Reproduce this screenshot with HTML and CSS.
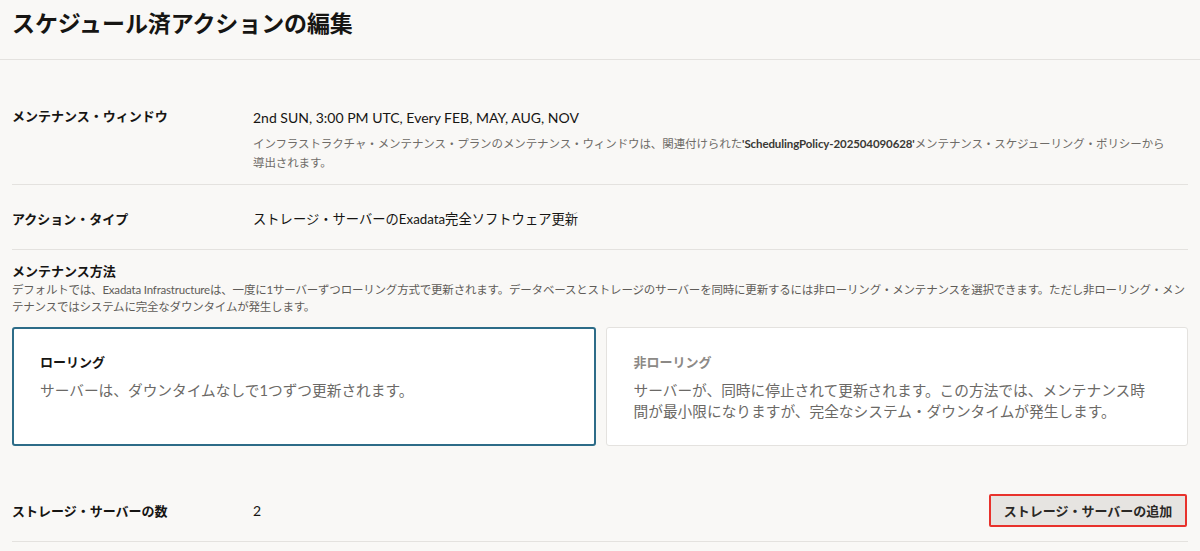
FILE: index.html
```html
<!DOCTYPE html>
<html lang="ja">
<head>
    <meta charset="utf-8">
    <title>スケジュール済アクションの編集</title>
    <link rel="stylesheet" href="styles.css">
</head>
<body>
    <!-- ヘッダー -->
    <header class="page-header">
        <h1 class="page-title">スケジュール済アクションの編集</h1>
    </header>

    <main class="page-body">
        <!-- メンテナンス・ウィンドウ -->
        <div class="field-row window-row">
            <div class="field-label">メンテナンス・ウィンドウ</div>
            <div class="field-value">
                <div class="value-text">2nd SUN, 3:00 PM UTC, Every FEB, MAY, AUG, NOV</div>
                <p class="value-help">インフラストラクチャ・メンテナンス・プランのメンテナンス・ウィンドウは、関連付けられた<b>'SchedulingPolicy-202504090628'</b>メンテナンス・スケジューリング・ポリシーから<br>導出されます。</p>
            </div>
        </div>

        <!-- アクション・タイプ -->
        <div class="field-row type-row">
            <div class="field-label">アクション・タイプ</div>
            <div class="field-value">
                <div class="value-text jp">ストレージ・サーバーのExadata完全ソフトウェア更新</div>
            </div>
        </div>

        <!-- メンテナンス方法 -->
        <section class="method">
            <div class="method-title">メンテナンス方法</div>
            <p class="method-help">デフォルトでは、Exadata Infrastructureは、一度に1サーバーずつローリング方式で更新されます。データベースとストレージのサーバーを同時に更新するには非ローリング・メンテナンスを選択できます。ただし非ローリング・メン<br>テナンスではシステムに完全なダウンタイムが発生します。</p>

            <div class="method-cards">
                <div class="method-card selected">
                    <div class="card-title">ローリング</div>
                    <div class="card-text">サーバーは、ダウンタイムなしで1つずつ更新されます。</div>
                </div>
                <div class="method-card">
                    <div class="card-title muted">非ローリング</div>
                    <div class="card-text">サーバーが、同時に停止されて更新されます。この方法では、メンテナンス時<br>間が最小限になりますが、完全なシステム・ダウンタイムが発生します。</div>
                </div>
            </div>
        </section>

        <!-- ストレージ・サーバーの数 -->
        <div class="field-row count-row">
            <div class="field-label">ストレージ・サーバーの数</div>
            <div class="field-value">
                <div class="value-text">2</div>
            </div>
            <button class="add-button">ストレージ・サーバーの追加</button>
        </div>
    </main>
</body>
</html>
```

FILE: styles.css
```css
body {
    margin: 0;
    background: #f9f8f6;
    color: #161513;
    font-family: Lato, "Noto Sans CJK JP", sans-serif;
}

.page-header {
    height: 59px;
    border-bottom: 1px solid #e4e2df;
    padding: 0 12px;
    display: flex;
    align-items: center;
}

.page-title {
    margin: 0 0 16px;
    font-size: 23px;
    font-weight: 700;
    letter-spacing: -0.1px;
}

.page-body {
    padding: 0 12px;
}

.field-row {
    display: flex;
    align-items: flex-start;
    border-bottom: 1px solid #e4e2df;
}

.field-label {
    width: 241px;
    flex-shrink: 0;
    font-size: 13px;
    font-weight: 700;
    line-height: 20px;
}

.field-value {
    flex: 1;
}

.value-text {
    font-size: 14px;
    line-height: 20px;
}

.value-text.jp {
    font-size: 13.3px;
}

.value-help {
    margin: 6px 0 0;
    font-size: 11.5px;
    line-height: 19px;
    color: #6f6c68;
    letter-spacing: -0.1px;
}

.value-help b {
    color: #3a3835;
}

.window-row {
    padding: 46px 0 12px;
}

.window-row .value-text {
    margin-top: 2px;
}

.type-row {
    padding: 24px 0 20px;
}

.method {
    padding-top: 11px;
}

.method-title {
    font-size: 13px;
    font-weight: 700;
    line-height: 20px;
}

.method-help {
    margin: 0;
    font-size: 11.5px;
    line-height: 17px;
    color: #5f5c58;
    letter-spacing: -0.2px;
    white-space: nowrap;
}

.method-cards {
    display: flex;
    gap: 10px;
    margin-top: 12px;
}

.method-card {
    flex: 1;
    min-height: 119px;
    box-sizing: border-box;
    background: #fff;
    border: 1px solid #e4e2df;
    border-radius: 3px;
    padding: 24px 26px 20px 27px;
}

.method-card.selected {
    border: 2px solid #2d6c88;
    padding: 23px 26px 20px 26px;
}

.card-title {
    font-size: 13px;
    font-weight: 700;
    line-height: 20px;
    color: #161513;
}

.card-title.muted {
    color: #8c8986;
}

.card-text {
    margin-top: 8px;
    font-size: 14.7px;
    line-height: 21px;
    color: #6b6966;
}

.count-row {
    align-items: center;
    padding: 48px 0 14px;
}

.add-button {
    margin-left: auto;
    margin-right: 1px;
    width: 198px;
    height: 33px;
    background: #e6e4e1;
    border: 2px solid #e8322c;
    border-radius: 2px;
    font-family: inherit;
    font-size: 13px;
    font-weight: 700;
    color: #2a2826;
    cursor: pointer;
}
```
